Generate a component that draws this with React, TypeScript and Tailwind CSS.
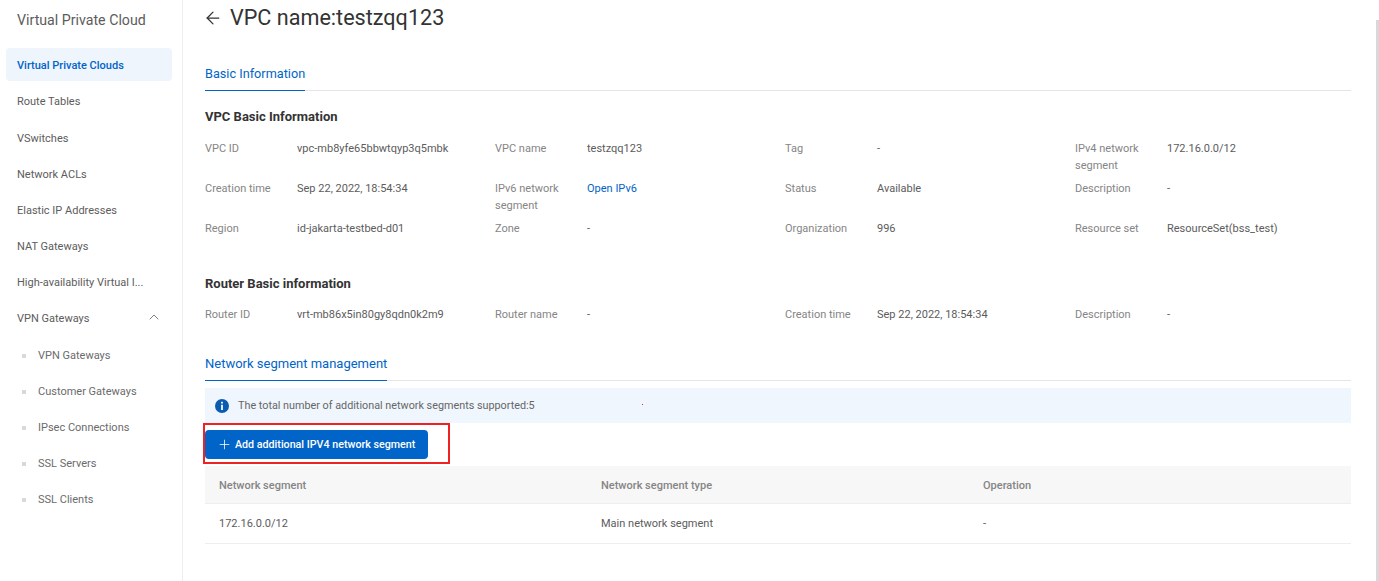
import { ArrowLeft, ChevronUp, Plus } from 'lucide-react';

const navItems = [
  'Route Tables',
  'VSwitches',
  'Network ACLs',
  'Elastic IP Addresses',
  'NAT Gateways',
  'High-availability Virtual I...',
];

const vpnItems = ['VPN Gateways', 'Customer Gateways', 'IPsec Connections', 'SSL Servers', 'SSL Clients'];

function Field({ label, value, link }: { label: string; value: string; link?: boolean }) {
  return (
    <div className="flex min-h-[34px] leading-[17px]">
      <div className="w-[92px] shrink-0 pr-4 text-[#858585]">{label}</div>
      <div className={link ? 'text-[#0064c8]' : 'text-[#5c5c5c]'}>{value}</div>
    </div>
  );
}

export default function App() {
  return (
    <div className="relative flex h-[581px] w-[1379px] overflow-hidden bg-white font-['Roboto',sans-serif] text-[11px] text-[#5c5c5c]">
      {/* Sidebar */}
      <aside className="h-full w-[183px] shrink-0 border-r border-[#eeeeee]">
        <div className="pl-[17px] pt-[11px] text-[14.2px] leading-[18px] text-[#5c5c5c]">Virtual Private Cloud</div>
        <nav className="mt-[19px] pl-[6px] pr-[10px]">
          <div className="flex h-[33px] items-center rounded-sm bg-[#eff5fd] pl-[11px] pt-[4px] font-medium text-[#0064c8]">
            Virtual Private Clouds
          </div>
          {navItems.map((item) => (
            <div key={item} className="mt-[3.17px] flex h-[33px] items-center pl-[11px] pt-[4px]">
              {item}
            </div>
          ))}
          <div className="mt-[3.17px] flex h-[33px] items-center justify-between pl-[11px] pr-[10px] pt-[4px]">
            VPN Gateways
            <ChevronUp className="mb-[5px] h-4 w-4 text-[#666666]" strokeWidth={1.25} />
          </div>
          {vpnItems.map((item) => (
            <div key={item} className="mt-[3.17px] flex h-[33px] items-center pl-[16px] pt-[4px] text-[#6b6b6b]">
              <span className="mr-[12px] h-[4px] w-[4px] bg-[#d9d9d9]" />
              {item}
            </div>
          ))}
        </nav>
      </aside>

      {/* Main */}
      <main className="min-w-0 flex-1 pl-[22px] pr-[28px]">
        <div className="flex h-[36px] items-center">
          <ArrowLeft className="mr-[5px] h-[20px] w-[20px] -translate-x-[2px] text-[#333333]" strokeWidth={1.5} />
          <h1 className="text-[21.6px] font-normal leading-[36px] text-[#333333]">VPC name:testzqq123</h1>
        </div>

        <div className="mt-[27px] flex h-[28px] border-b border-[#e5e5e5]">
          <div className="-mb-px border-b-[1.5px] border-[#0064c8] pt-px text-[12.7px] leading-[20px] text-[#0064c8]">
            Basic Information
          </div>
        </div>

        <h2 className="mt-[17px] text-[13px] font-bold leading-[18px] text-[#333333]">VPC Basic Information</h2>
        <div className="mt-[14px] grid grid-cols-[290px_290px_290px_1fr] gap-y-[6px]">
          <Field label="VPC ID" value="vpc-mb8yfe65bbwtqyp3q5mbk" />
          <Field label="VPC name" value="testzqq123" />
          <Field label="Tag" value="-" />
          <Field label="IPv4 network segment" value="172.16.0.0/12" />
          <Field label="Creation time" value="Sep 22, 2022, 18:54:34" />
          <Field label="IPv6 network segment" value="Open IPv6" link />
          <Field label="Status" value="Available" />
          <Field label="Description" value="-" />
          <Field label="Region" value="id-jakarta-testbed-d01" />
          <Field label="Zone" value="-" />
          <Field label="Organization" value="996" />
          <Field label="Resource set" value="ResourceSet(bss_test)" />
        </div>

        <h2 className="mt-[21px] text-[13px] font-bold leading-[18px] text-[#333333]">Router Basic information</h2>
        <div className="mt-[13px] grid grid-cols-[290px_290px_290px_1fr]">
          <Field label="Router ID" value="vrt-mb86x5in80gy8qdn0k2m9" />
          <Field label="Router name" value="-" />
          <Field label="Creation time" value="Sep 22, 2022, 18:54:34" />
          <Field label="Description" value="-" />
        </div>

        <div className="mt-[14px] flex h-[27px] border-b border-[#e5e5e5]">
          <div className="-mb-px border-b-[1.5px] border-[#0064c8] text-[13px] leading-[20px] text-[#0064c8]">
            Network segment management
          </div>
        </div>

        <div className="mt-[7px] flex h-[35px] items-center bg-[#eff6fe] pl-[10px] text-[10.8px] text-[#666666]">
          <svg viewBox="0 0 16 16" className="mr-[9px] h-[14px] w-[14px]">
            <circle cx="8" cy="8" r="8" fill="#0a5cb0" />
            <rect x="7" y="3.2" width="2" height="2" fill="#fff" />
            <rect x="7" y="6.6" width="2" height="6" fill="#fff" />
          </svg>
          <span className="pt-[2px]">The total number of additional network segments supported:5</span>
        </div>

        <button className="mt-[7px] flex h-[29px] w-[223px] items-center whitespace-nowrap rounded-sm bg-[#0064c8] pl-[12px] text-[10.7px] font-medium text-white">
          <Plus className="mr-[3px] h-[15px] w-[15px]" strokeWidth={1.25} />
          <span className="pt-px">Add additional IPV4 network segment</span>
        </button>

        <div className="mt-[7px]">
          <div className="grid h-[38px] grid-cols-3 items-center border-b border-[#eeeeee] bg-[#f7f7f7] pt-[4px] font-medium text-[#858585]">
            <div className="pl-[14px]">Network segment</div>
            <div className="pl-[14px]">Network segment type</div>
            <div className="pl-[14px]">Operation</div>
          </div>
          <div className="grid h-[40px] grid-cols-3 items-center border-b border-[#eeeeee] pt-px">
            <div className="pl-[14px]">172.16.0.0/12</div>
            <div className="pl-[14px]">Main network segment</div>
            <div className="pl-[14px]">-</div>
          </div>
        </div>
      </main>

      {/* Annotation drawn over the screenshot */}
      <div className="absolute left-[203px] top-[423px] h-[41px] w-[247px] border-2 border-[#ee2222]" />
      <div className="absolute left-[642px] top-[404px] h-px w-px bg-[#ee2222]" />
      {/* Scrollbar */}
      <div className="absolute right-0 top-[20px] h-[561px] w-[3px] bg-[#d8d8d8]" />
    </div>
  );
}
